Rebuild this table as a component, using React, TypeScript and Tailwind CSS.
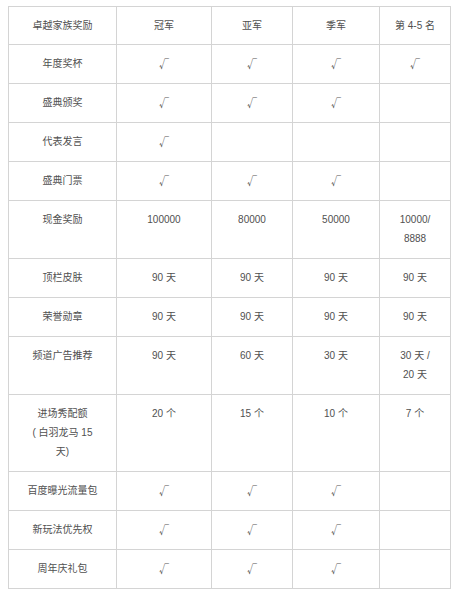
import React from "react";

const C = "√";
type Row = { h: string; cells: string[][] };

const rows: Row[] = [
  { h: "年度奖杯", cells: [[C], [C], [C], [C]] },
  { h: "盛典颁奖", cells: [[C], [C], [C], []] },
  { h: "代表发言", cells: [[C], [], [], []] },
  { h: "盛典门票", cells: [[C], [C], [C], []] },
  { h: "现金奖励", cells: [["100000"], ["80000"], ["50000"], ["10000/", "8888"]] },
  { h: "顶栏皮肤", cells: [["90 天"], ["90 天"], ["90 天"], ["90 天"]] },
  { h: "荣誉勋章", cells: [["90 天"], ["90 天"], ["90 天"], ["90 天"]] },
  { h: "频道广告推荐", cells: [["90 天"], ["60 天"], ["30 天"], ["30 天 /", "20 天"]] },
  { h: "进场秀配额|( 白羽龙马 15|天)", cells: [["20 个"], ["15 个"], ["10 个"], ["7 个"]] },
  { h: "百度曝光流量包", cells: [[C], [C], [C], []] },
  { h: "新玩法优先权", cells: [[C], [C], [C], []] },
  { h: "周年庆礼包", cells: [[C], [C], [C], []] },
];

const cell = "bg-white text-center pt-[9px] pb-[10px] leading-[19px]";

function Lines({ lines }: { lines: string[] }) {
  return (
    <>
      {lines.map((l, i) => (
        <div key={i} className={l === C ? "font-['Noto_Sans_CJK_SC'] text-[#555]" : ""}>
          {l}
        </div>
      ))}
    </>
  );
}

export default function App() {
  return (
    <div className="w-[458px] h-[595px] bg-white pt-[6px] pl-[8px] font-['Liberation_Sans','Noto_Sans_CJK_SC',sans-serif] text-[10px] text-[#505050]">
      <div className="grid w-[443px] grid-cols-[107px_94px_80px_86px_70px] gap-px bg-[#d4d4d4] p-px">
        {["卓越家族奖励", "冠军", "亚军", "季军", "第 4-5 名"].map((t) => (
          <div key={t} className="bg-white text-center pt-[9px] pb-[9px] leading-[19px]">
            {t}
          </div>
        ))}
        {rows.map((r) => (
          <React.Fragment key={r.h}>
            <div className={cell}>
              <Lines lines={r.h.split("|")} />
            </div>
            {r.cells.map((c, i) => (
              <div key={i} className={cell}>
                <Lines lines={c} />
              </div>
            ))}
          </React.Fragment>
        ))}
      </div>
    </div>
  );
}
